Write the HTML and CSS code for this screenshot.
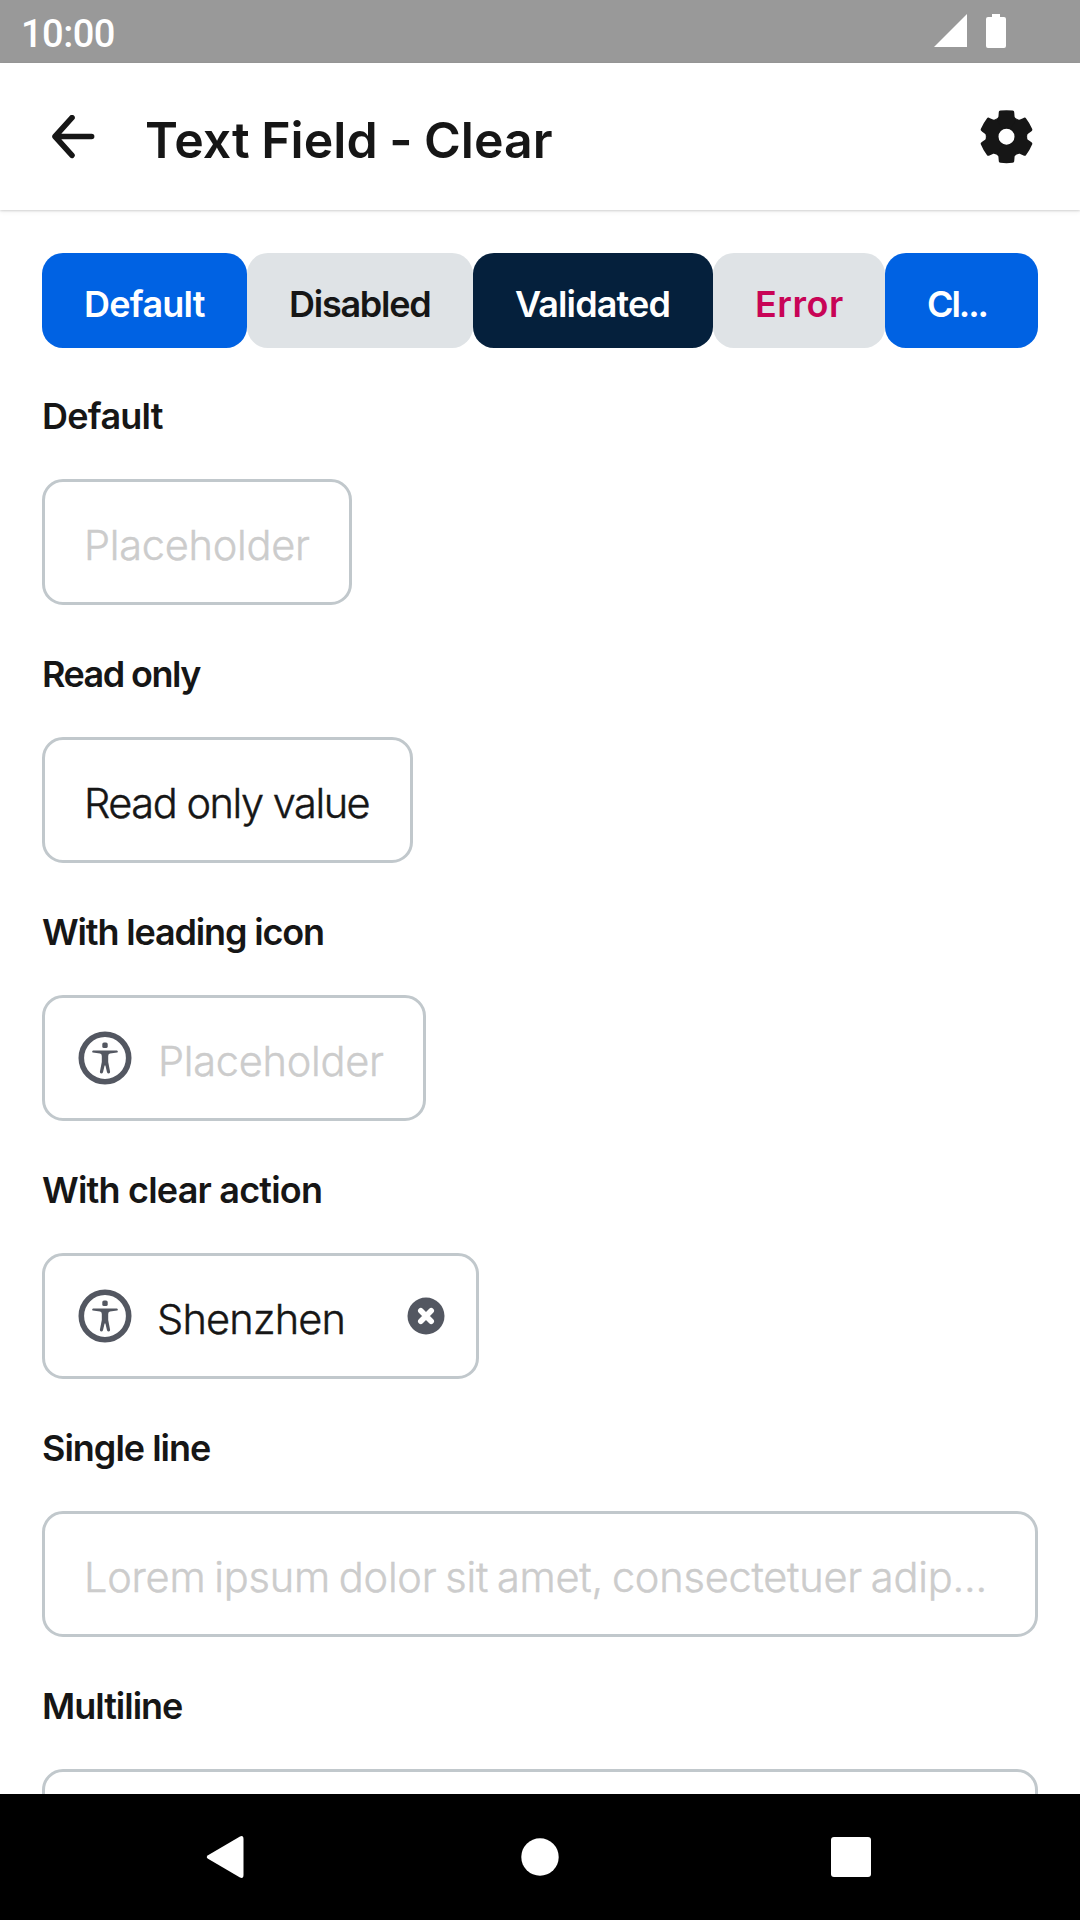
FILE: index.html
```html
<!DOCTYPE html>
<html lang="en">
<head>
<meta charset="utf-8">
<title>Text Field - Clear</title>
<link rel="stylesheet" href="styles.css">
</head>
<body>
<svg class="sprite" aria-hidden="true">
  <symbol id="person" viewBox="-27 -27 54 54">
    <circle r="23.7" fill="none" stroke="currentColor" stroke-width="5.6"/>
    <rect x="-2.7" y="-15.6" width="5.4" height="5.7" rx="1.7" fill="currentColor"/>
    <path fill="currentColor" d="M-12-7.6H12a1.2 1.2 0 0 1 .2 2.2L5-4.4Q3.2-4 3.2-2V4L5.1 13.8Q5.2 15.5 3.8 15.5T2 14.2L.4 7.6h-.8L-2 14.2Q-2.4 15.5-3.8 15.5T-5.1 13.8L-3.2 4V-2Q-3.2-4-5-4.4L-12.2-5.4a1.2 1.2 0 0 1 .2-2.2Z"/>
  </symbol>
</svg>
<div class="screen">
  <header class="status">
    <span class="clock">10:00</span>
    <span class="indicators">
      <svg width="33" height="33" viewBox="0 0 33 33"><path d="M0 33H33V0Z" fill="#fff"/></svg>
      <svg width="20" height="34" viewBox="0 0 20 34"><path d="M6 0h8v3h4a2 2 0 0 1 2 2v27a2 2 0 0 1-2 2H2a2 2 0 0 1-2-2V5a2 2 0 0 1 2-2h4Z" fill="#fff"/></svg>
    </span>
  </header>
  <div class="appbar">
    <svg class="back" width="44" height="44" viewBox="-22 -21.5 44 44"><path d="M-1-18.8-18 0-1 18.8M-17.8 0H18.6" fill="none" stroke="#161616" stroke-width="5.6" stroke-linecap="round" stroke-linejoin="round"/></svg>
    <h1 class="title">Text Field - Clear</h1>
    <svg class="gear" width="54" height="54" viewBox="-27.5 -26.7 54 54" fill="#161616">
      <defs><path id="tooth" d="M-10.3-17.9C-8.6-18.9-8-19.3-8-21L-7.8-23.6C-7.7-25.4-7.2-26-6-26.1Q0-26.9 6-26.1C7.2-26 7.7-25.4 7.8-23.6L8-21C8-19.3 8.6-18.9 10.3-17.9L5.2-8Q0-9.8-5.2-8Z"/></defs>
      <circle r="14" fill="none" stroke="#161616" stroke-width="12"/>
      <use href="#tooth"/><use href="#tooth" transform="rotate(60)"/><use href="#tooth" transform="rotate(120)"/><use href="#tooth" transform="rotate(180)"/><use href="#tooth" transform="rotate(240)"/><use href="#tooth" transform="rotate(300)"/>
    </svg>
  </div>
  <main class="content">
    <nav class="tabs">
      <span class="tab primary t-default">Default</span>
      <span class="tab muted t-disabled">Disabled</span>
      <span class="tab dark t-validated">Validated</span>
      <span class="tab muted error t-error">Error</span>
      <span class="tab primary t-clear">Cl...</span>
    </nav>
    <section class="group">
      <h2 class="label l-default">Default</h2>
      <div class="field f-default"><span class="hint">Placeholder</span></div>
    </section>
    <section class="group">
      <h2 class="label l-read">Read only</h2>
      <div class="field f-read"><span class="value">Read only value</span></div>
    </section>
    <section class="group">
      <h2 class="label l-leading">With leading icon</h2>
      <div class="field f-leading"><svg class="lead"><use href="#person"/></svg><span class="hint">Placeholder</span></div>
    </section>
    <section class="group">
      <h2 class="label l-clear">With clear action</h2>
      <div class="field f-clear"><svg class="lead"><use href="#person"/></svg><span class="value">Shenzhen</span>
        <svg class="clear" width="38" height="38" viewBox="-19 -19 38 38"><circle r="18.5" fill="#535761"/><path d="M-5.2-5.2 5.2 5.2M5.2-5.2-5.2 5.2" stroke="#fff" stroke-width="5.6" stroke-linecap="round"/></svg>
      </div>
    </section>
    <section class="group">
      <h2 class="label l-single">Single line</h2>
      <div class="field f-single"><span class="hint">Lorem ipsum dolor sit amet, consectetuer adip...</span></div>
    </section>
    <section class="group">
      <h2 class="label l-multi">Multiline</h2>
      <div class="field f-multi"></div>
    </section>
  </main>
  <footer class="navbar">
    <svg width="44" height="44" viewBox="-22 -22 44 44"><path d="M-19-1.8Q-21.5 0-19 1.8L13 20.6Q16.5 22 16.5 18V-18Q16.5-22 13-20.6Z" fill="#fff"/></svg>
    <svg width="44" height="44" viewBox="-23 -22 44 44"><circle r="18.7" fill="#fff"/></svg>
    <svg width="44" height="44" viewBox="-22 -22 44 44"><rect x="-20" y="-20" width="40" height="40" rx="3" fill="#fff"/></svg>
  </footer>
</div>
</body>
</html>
```
FILE: styles.css
```css
* { box-sizing: border-box; }
body { margin: 0; background: #fff; color: #161616; font-family: Inter, sans-serif; }
h1, h2 { margin: 0; }
svg { display: block; flex: none; }
.sprite { position: absolute; width: 0; height: 0; }
.screen { width: 1080px; height: 1920px; display: flex; flex-direction: column; overflow: hidden; }

.status { height: 63px; flex: none; display: flex; justify-content: space-between; padding: 0 74px 0 21px; background: #999; color: #fff; }
.clock { padding-top: 3px; font: 500 38px/63px Roboto, sans-serif; letter-spacing: -.5px; }
.indicators { display: flex; gap: 19px; padding-top: 14px; }

.appbar { height: 147px; flex: none; display: flex; align-items: center; padding: 0 47px 0 51px; box-shadow: 0 1px 2px rgba(0, 0, 0, .14), 0 2px 5px rgba(0, 0, 0, .05); }
.title { flex: 1; margin-left: 50px; padding-top: 6px; font-size: 50px; line-height: 60px; font-weight: 600; letter-spacing: .05px; word-spacing: -1.2px; white-space: nowrap; }

.content { flex: 1; min-height: 0; overflow: hidden; display: flex; flex-direction: column; padding: 43px 42px 0; }
.tabs { display: flex; height: 95px; flex: none; margin-bottom: 47px; }
.tab { padding: 7px 0 0 42px; border-radius: 21px; font-size: 36px; line-height: 88px; font-weight: 600; white-space: nowrap; }
.primary { background: #0062e3; color: #fff; }
.muted { background: #dfe3e6; }
.dark { background: #05203c; color: #fff; }
.error { color: #c80456; }
.t-default { width: 205px; letter-spacing: -.75px; }
.t-disabled { width: 226px; letter-spacing: -1.25px; }
.t-validated { width: 240px; letter-spacing: -.88px; }
.t-error { width: 172px; letter-spacing: .54px; }
.t-clear { width: 153px; letter-spacing: -2.1px; }

.group { flex: none; margin-bottom: 48px; }
.label { margin-bottom: 42px; font-size: 36px; line-height: 42px; font-weight: 600; white-space: nowrap; }
.l-default { letter-spacing: -.75px; }
.l-read { letter-spacing: -1.55px; }
.l-leading { letter-spacing: -1.16px; }
.l-clear { letter-spacing: -.8px; }
.l-single { letter-spacing: -1px; }
.l-multi { letter-spacing: -1.02px; }

.field { height: 126px; display: flex; align-items: center; padding: 0 30px 0 39px; border: 3px solid #c1c8cc; border-radius: 21px; font-size: 41.5px; line-height: 50px; font-weight: 300; white-space: nowrap; }
.hint, .value { padding-top: 6px; -webkit-text-stroke: .45px currentColor; }
.hint { color: #ccc; letter-spacing: -.26px; }
.lead { width: 54px; height: 54px; color: #535761; }
.f-default { width: 310px; }
.f-read { width: 371px; letter-spacing: -1.45px; }
.f-leading { width: 384px; padding-left: 33px; gap: 26px; }
.f-clear { width: 437px; padding-left: 33px; gap: 25px; letter-spacing: -.8px; }
.clear { margin-left: auto; margin-right: 1px; }
.f-single .hint { letter-spacing: -.22px; word-spacing: -2.6px; }

.navbar { height: 126px; flex: none; display: flex; justify-content: space-between; align-items: center; padding: 0 207px 0 205px; background: #000; }
```
